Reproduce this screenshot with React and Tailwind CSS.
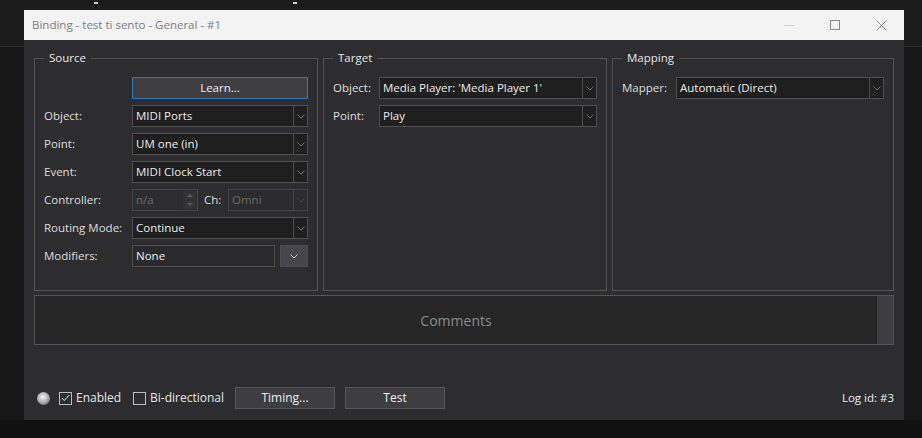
import React from "react";

function Chevron({ c = "#777" }) {
  return (
    <svg width="8" height="5" viewBox="0 0 8 5">
      <path d="M0.5 0.5 L4 4 L7.5 0.5" fill="none" stroke={c} strokeWidth="1" />
    </svg>
  );
}

function Combo({ value, disabled, className = "" }) {
  return (
    <div
      className={`h-[22px] flex border ${
        disabled
          ? "border-[#464646] bg-[#2c2c2e] text-[#6a6a6a]"
          : "border-[#4e4e4e] bg-[#1f1f1f] text-[#ececec]"
      } ${className}`}
    >
      <div className="flex-1 min-w-0 flex items-center pl-[3px] whitespace-nowrap overflow-hidden">{value}</div>
      <div
        className={`w-[14px] border-l flex items-center justify-center ${
          disabled ? "border-[#464646]" : "border-[#4e4e4e]"
        }`}
      >
        <Chevron c={disabled ? "#4a4a4a" : "#6e6e6e"} />
      </div>
    </div>
  );
}

function Group({ title, className = "", children }) {
  return (
    <fieldset className={`h-full min-w-0 border border-[#545454] px-[9px] pt-[11px] ${className}`}>
      <legend className="px-[5px] leading-[16px] text-[#e6e6e6]">{title}</legend>
      <div className="flex flex-col gap-[6px]">{children}</div>
    </fieldset>
  );
}

function Check({ checked }) {
  return (
    <div className="w-[13px] h-[13px] border border-[#bdbdbd] flex items-center justify-center">
      {checked && (
        <svg width="9" height="8" viewBox="0 0 9 8">
          <path d="M0.8 4 L3.3 6.5 L8.3 1" fill="none" stroke="#e8e8e8" strokeWidth="1" />
        </svg>
      )}
    </div>
  );
}

export default function App() {
  return (
    <div className="relative w-[922px] h-[438px] flex flex-col bg-[#161616] overflow-hidden font-['Open_Sans',sans-serif] text-[11.5px] text-[#dedede]">
      <div className="h-[47px] bg-[#1b1b1b] border-b border-[#2e2e2e] flex items-start">
        <span className="ml-[94px] mt-[2px] w-[4px] h-[2px] bg-[#cfcfcf]" />
        <span className="ml-[195px] mt-[2px] w-[4px] h-[2px] bg-[#cfcfcf]" />
      </div>
      <div className="flex-1 bg-[#171717]" />
      <div className="h-[18px] bg-[#111111]" />

      <div className="absolute left-[24px] top-[10px] w-[880px] h-[410px] bg-[#2d2d30] flex flex-col">
        {/* title bar */}
        <div className="h-[30px] bg-[#f3f3f3] flex items-center">
          <div className="pl-[8px] flex-1 text-[#7d7d7d] text-[11.5px]">Binding - test ti sento - General - #1</div>
          <div className="flex h-full">
            <div className="w-[46px] h-full flex items-center justify-center">
              <div className="w-[10px] h-px bg-[#d0d0d0]" />
            </div>
            <div className="w-[46px] h-full flex items-center justify-center">
              <div className="w-[10px] h-[10px] border border-[#8a8a8a]" />
            </div>
            <div className="w-[46px] h-full flex items-center justify-center">
              <svg width="11" height="11" viewBox="0 0 11 11">
                <path d="M0.5 0.5 L10.5 10.5 M10.5 0.5 L0.5 10.5" stroke="#8a8a8a" strokeWidth="1" />
              </svg>
            </div>
          </div>
        </div>

        {/* body */}
        <div className="flex-1 flex flex-col px-[10px] pt-[10px] pb-[11px]">
          <div className="h-[241px] flex gap-[5px]">
            <Group title="Source" className="w-[284px]">
              <div className="flex h-[22px]">
                <div className="w-[88px]" />
                <button className="flex-1 h-[22px] border border-[#2a78c4] bg-[#3e3e43] text-[#f0f0f0]">Learn...</button>
              </div>
              <div className="flex items-center h-[22px]">
                <div className="w-[88px]">Object:</div>
                <Combo value="MIDI Ports" className="flex-1" />
              </div>
              <div className="flex items-center h-[22px]">
                <div className="w-[88px]">Point:</div>
                <Combo value="UM one (in)" className="flex-1" />
              </div>
              <div className="flex items-center h-[22px]">
                <div className="w-[88px]">Event:</div>
                <Combo value="MIDI Clock Start" className="flex-1" />
              </div>
              <div className="flex items-center h-[22px]">
                <div className="w-[88px]">Controller:</div>
                <div className="w-[66px] h-[22px] flex border border-[#464646] text-[#6a6a6a]">
                  <div className="flex-1 flex items-center pl-[3px]">n/a</div>
                  <div className="w-[15px] flex flex-col gap-px p-px">
                    <div className="flex-1 bg-[#333335] flex items-center justify-center">
                      <svg width="6" height="3" viewBox="0 0 6 3"><path d="M0 3 L3 0 L6 3 Z" fill="#5a5a5a" /></svg>
                    </div>
                    <div className="flex-1 bg-[#333335] flex items-center justify-center">
                      <svg width="6" height="3" viewBox="0 0 6 3"><path d="M0 0 L3 3 L6 0 Z" fill="#5a5a5a" /></svg>
                    </div>
                  </div>
                </div>
                <div className="ml-[6px] w-[24px]">Ch:</div>
                <Combo value="Omni" disabled className="flex-1" />
              </div>
              <div className="flex items-center h-[22px]">
                <div className="w-[88px] whitespace-nowrap">Routing Mode:</div>
                <Combo value="Continue" className="flex-1" />
              </div>
              <div className="flex items-center h-[22px]">
                <div className="w-[88px]">Modifiers:</div>
                <div className="w-[143px] h-[22px] border border-[#4e4e4e] bg-[#2a2a2c] flex items-center pl-[3px] text-[#ececec]">None</div>
                <div className="ml-[5px] flex-1 h-[22px] bg-[#45454a] border border-[#4c4c50] flex items-center justify-center">
                  <Chevron c="#d0d0d0" />
                </div>
              </div>
            </Group>

            <Group title="Target" className="w-[284px]">
              <div className="flex items-center h-[22px]">
                <div className="w-[46px]">Object:</div>
                <Combo value="Media Player: 'Media Player 1'" className="flex-1" />
              </div>
              <div className="flex items-center h-[22px]">
                <div className="w-[46px]">Point:</div>
                <Combo value="Play" className="flex-1" />
              </div>
            </Group>

            <Group title="Mapping" className="flex-1">
              <div className="flex items-center h-[22px]">
                <div className="w-[54px]">Mapper:</div>
                <Combo value="Automatic (Direct)" className="flex-1" />
              </div>
            </Group>
          </div>

          {/* comments */}
          <div className="mt-[4px] h-[50px] border border-[#545454] bg-[#262627] flex">
            <div className="flex-1 flex items-center justify-center text-[14px] text-[#8c8c8c]">Comments</div>
            <div className="w-[16px] bg-[#3e3e42]" />
          </div>

          <div className="flex-1" />

          {/* bottom row */}
          <div className="h-[22px] flex items-center text-[12px]">
            <div className="ml-[3px] w-[13px] h-[13px] rounded-full bg-[radial-gradient(circle_at_45%_40%,#f4f4f4_0%,#c4c4c4_35%,#8a8a8a_70%,#5c5c5c_100%)]" />
            <div className="ml-[9px]"><Check checked /></div>
            <span className="ml-[4px] w-[45px] whitespace-nowrap text-[#e6e6e6]">Enabled</span>
            <div className="ml-[12px]"><Check /></div>
            <span className="ml-[4px] w-[73px] whitespace-nowrap text-[#e6e6e6]">Bi-directional</span>
            <button className="ml-[12px] w-[100px] h-[22px] border border-[#555558] bg-[#3e3e42] text-[#ececec]">Timing...</button>
            <button className="ml-[10px] w-[100px] h-[22px] border border-[#555558] bg-[#3e3e42] text-[#ececec]">Test</button>
            <span className="ml-auto text-[11.5px] text-[#eeeeee]">Log id: #3</span>
          </div>
        </div>
      </div>
    </div>
  );
}
